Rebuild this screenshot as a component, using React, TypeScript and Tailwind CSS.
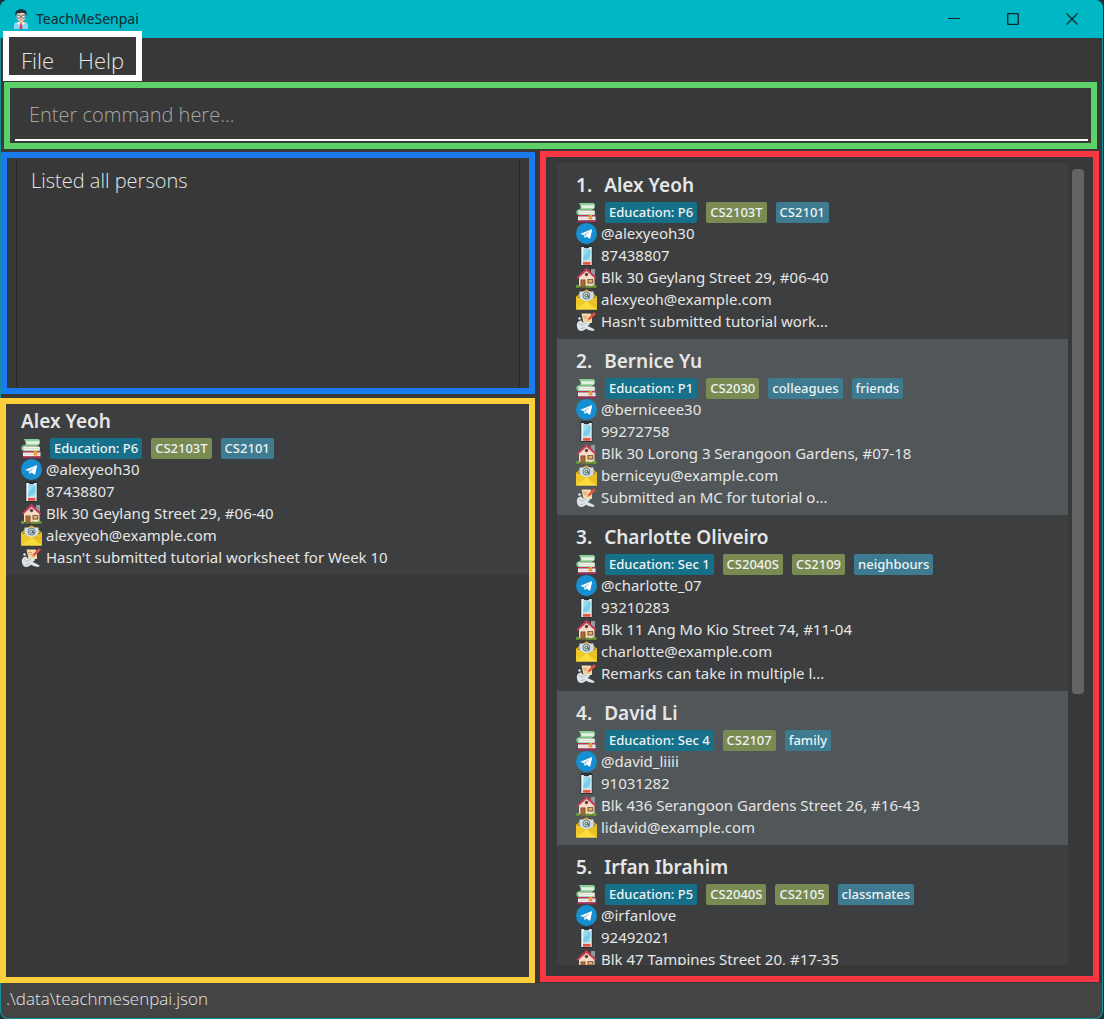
import React from "react";

type Tag = { text: string; kind: "edu" | "module" | "plain" };
type Person = {
  name: string;
  tags: Tag[];
  handle: string;
  phone: string;
  address: string;
  email?: string;
  remark?: string;
};

const edu = (text: string): Tag => ({ text, kind: "edu" });
const mod = (text: string): Tag => ({ text, kind: "module" });
const tag = (text: string): Tag => ({ text, kind: "plain" });

const alex: Person = {
  name: "Alex Yeoh",
  tags: [edu("Education: P6"), mod("CS2103T"), tag("CS2101")],
  handle: "@alexyeoh30",
  phone: "87438807",
  address: "Blk 30 Geylang Street 29, #06-40",
  email: "alexyeoh@example.com",
  remark: "Hasn't submitted tutorial worksheet for Week 10",
};

const people: Person[] = [
  { ...alex, remark: "Hasn't submitted tutorial work..." },
  {
    name: "Bernice Yu",
    tags: [edu("Education: P1"), mod("CS2030"), tag("colleagues"), tag("friends")],
    handle: "@berniceee30",
    phone: "99272758",
    address: "Blk 30 Lorong 3 Serangoon Gardens, #07-18",
    email: "berniceyu@example.com",
    remark: "Submitted an MC for tutorial o...",
  },
  {
    name: "Charlotte Oliveiro",
    tags: [edu("Education: Sec 1"), mod("CS2040S"), mod("CS2109"), tag("neighbours")],
    handle: "@charlotte_07",
    phone: "93210283",
    address: "Blk 11 Ang Mo Kio Street 74, #11-04",
    email: "charlotte@example.com",
    remark: "Remarks can take in multiple l...",
  },
  {
    name: "David Li",
    tags: [edu("Education: Sec 4"), mod("CS2107"), tag("family")],
    handle: "@david_liiii",
    phone: "91031282",
    address: "Blk 436 Serangoon Gardens Street 26, #16-43",
    email: "lidavid@example.com",
  },
  {
    name: "Irfan Ibrahim",
    tags: [edu("Education: P5"), mod("CS2040S"), mod("CS2105"), tag("classmates")],
    handle: "@irfanlove",
    phone: "92492021",
    address: "Blk 47 Tampines Street 20, #17-35",
  },
];

const tagColors = {
  edu: "bg-[#17708a]",
  module: "bg-[#7a8a53]",
  plain: "bg-[#3e7b91]",
};

function Icon({ children }: { children: React.ReactNode }) {
  return (
    <svg aria-hidden="true" viewBox="0 0 21 21" className="size-[21px] shrink-0">
      {children}
    </svg>
  );
}

const BooksIcon = () => (
  <Icon>
    <path d="M3 1h14q2 0 2 3t-2 3.500H4Q5.500 5 3 1Z" fill="#8ccf98" />
    <path d="M5 3.200h13q.4 1.600-.3 3H5.400Q5.900 4.500 5 3.200Z" fill="#e4f0e2" />
    <path d="M2.500 7.300H16v1.200H3.500v3.600H19v1H2.500Q.3 12.700.3 10.200t2.200-2.900Z" fill="#8ccf98" />
    <path d="M3 8.500h15.500q1 2 0 3.800H3q-1-2 0-3.800Z" fill="#f4f4ee" />
    <path d="M3.500 10.500h15" stroke="#cdd8c8" strokeWidth=".8" />
    <path d="M2 13h17.500v1.500H3Q2 14.500 2 13Z" fill="#c92f5b" />
    <path d="M2 14.500h17.500v3.900H2Z" fill="#f5efec" />
    <path d="M3 16.400h16" stroke="#dccaca" strokeWidth=".8" />
    <path d="M.5 18.400h20v1.800H3Q1 20 .5 18.400Z" fill="#a82a5a" />
    <path d="M12.800 13h3.400v5.300l-1.700-1.200-1.700 1.200Z" fill="#f0963a" />
  </Icon>
);

const TelegramIcon = () => (
  <Icon>
    <circle cx="10.500" cy="10.500" r="10.500" fill="#168fd2" />
    <path d="M4.500 10.700 15.500 6.200q.8-.1.600.8l-1.800 8q-.3.900-1.100.4l-2.700-2-1.500 1.400q-.5.400-.6-.3l-.8-2.800-3-.5q-.8-.3-.1-.5Z" fill="#fff" />
    <path d="M8 11.600 14 7.700l-4.500 5-.5 1.800Z" fill="#8fc8e9" />
  </Icon>
);

const PhoneIcon = () => (
  <Icon>
    <rect x="4.500" y="0" width="12" height="21" rx="1.500" fill="#26333b" />
    <path d="M5.300 2h2.200l1 1.300h4l1-1.300h2.200v18H5.300Z" fill="#eef3f3" />
    <path d="M7.300 4h7v11.500h-7Z" fill="#8fdcf0" />
    <path d="M14.300 4v7L9 15.500H7.300V12Z" fill="#74cdea" />
    <rect x="7" y="16.800" width="7.500" height="3" fill="#e8503f" />
  </Icon>
);

const HouseIcon = () => (
  <Icon>
    <path d="M15 2h4v7l-4-3Z" fill="#8f9ba5" />
    <path d="M3 10 10.500 3l8 7.500V19H3Z" fill="#f5dcc5" />
    <path d="M.5 10.500 10.500.8l10 9.700-1.500 1L10.500 4 2 11.500Z" fill="#c83b55" />
    <circle cx="10.500" cy="7.500" r="1.700" fill="#5a4053" />
    <rect x="4.500" y="12.500" width="5" height="7" fill="#7c4d2c" />
    <rect x="5.300" y="13.200" width="3.400" height="6.200" fill="#a9682f" />
    <rect x="11.500" y="12.200" width="5.800" height="4.300" fill="#69432e" />
    <rect x="12.400" y="13" width="4" height="2.600" fill="#e5b064" />
    <path d="M0 20.500v-1.800q1.600-1.800 3.200 0v1.800ZM10 20.500v-1.200q1.500-1.800 3-.8t3 0 4.500 0v2Z" fill="#6da83f" />
    <path d="M0 20h20.500" stroke="#718c3a" />
  </Icon>
);

const MailIcon = () => (
  <Icon>
    <path d="m0 8 3-3L10.500.2 18 5l3 3Z" fill="#d8a51c" />
    <path d="M3.500 2.500h14v12h-14Z" fill="#cfdfe4" />
    <path d="M0 7.500 10.500 13 21 7.500V20.500H0Z" fill="#f4d32f" />
    <path d="M21 7.500v13L10.500 13Z" fill="#e8c026" />
    <path d="M0 7.500v13L10.500 13Z" fill="#f0c928" />
    <path d="m0 20.500 10.500-8 10.500 8Z" fill="#f7dc3c" />
    <circle cx="10.500" cy="6.600" r="3.500" fill="none" stroke="#5c727a" strokeWidth=".9" />
    <path d="M11.800 8.300V5.100M11.800 6.800a1.500 1.500 0 1 1 0-.2Q11.800 8.800 13.800 8.300" fill="none" stroke="#3b5056" strokeWidth=".9" />
  </Icon>
);

const RemarkIcon = () => (
  <Icon>
    <path d="M5.500 2.500h9l1.500 2v7.500H7.500Z" fill="#f5d9ac" />
    <path d="M7 5.500h4M8 7.500h3" stroke="#d99a55" strokeWidth=".9" />
    <path d="M.8 14q.2-3.500 3.200-4.200 2.200-1 2 1.200l2.500 1q3-2.500 4.200-.6l1.500 1.500-2.500 2 4.300 2.200 2.500 1.400-.7 1.400-4.500-.7-3.500-1.500Q8 20 5 20 1 19.500.8 14Z" fill="#dde4e8" />
    <path d="m3 12 3 2.500 4-2.500M4.500 18l4-1.500" fill="none" stroke="#a8b5bc" strokeWidth=".8" />
    <path d="m11.500 7.800 6.500-6.500 2 1.800L13.500 9.300Z" fill="#e0533f" />
    <path d="m11.500 7.800-1 2.700 3-1.200Z" fill="#f4a23c" />
    <circle cx="3.500" cy="7.500" r="1.200" fill="#eef2f3" />
  </Icon>
);

function Avatar() {
  return (
    <svg aria-hidden="true" viewBox="0 0 14 20" className="h-5 w-3.5">
      <path d="M0 20v-4q0-2.500 3-3h8q3 .5 3 3v4Z" fill="#8fd3f5" />
      <path d="M5 11h4v3l-2 2-2-2Z" fill="#efb99a" />
      <path d="m4 13 3 2 3-2 .5 2-3.500 1-3.500-1Z" fill="#fff" />
      <path d="M6.200 14.300h1.600l.7 5.700h-3Z" fill="#d64052" />
      <ellipse cx="7" cy="7.500" rx="4.700" ry="5" fill="#f6cbb0" />
      <path d="M1.800 7Q0 2 4 1q3-2 6 0 3.500.5 2.300 6-1-3-3-3.200Q5 4.500 3.200 4.200 2.500 5 1.800 7Z" fill="#173044" />
      <rect x="2.900" y="6.300" width="3.500" height="2.800" rx="1" fill="#dff2f6" stroke="#294153" strokeWidth=".7" />
      <rect x="7.600" y="6.300" width="3.500" height="2.800" rx="1" fill="#dff2f6" stroke="#294153" strokeWidth=".7" />
      <path d="M6.400 7.300h1.200M6 10.700h2" stroke="#7a4a42" strokeWidth=".6" />
    </svg>
  );
}

function Row({ icon, children }: { icon: React.ReactNode; children: React.ReactNode }) {
  return (
    <div className="flex h-[22px] items-start gap-1 whitespace-nowrap text-[15px] leading-5">
      {icon}
      <span>{children}</span>
    </div>
  );
}

function PersonCard({ person, index }: { person: Person; index?: number }) {
  return (
    <>
      <h2 className="mb-0.5 flex gap-3 whitespace-nowrap text-[19px] leading-7 font-semibold">
        {index !== undefined && <span>{index}.</span>}
        <span>{person.name}</span>
      </h2>
      <div className="flex h-[22px] items-center gap-2">
        <BooksIcon />
        <ul className="flex gap-[9px]">
          {person.tags.map((t) => (
            <li
              key={t.text}
              className={`rounded-xs px-1 text-[13px] leading-[21px] font-medium whitespace-nowrap text-[#eef3f4] ${tagColors[t.kind]}`}
            >
              {t.text}
            </li>
          ))}
        </ul>
      </div>
      <Row icon={<TelegramIcon />}>{person.handle}</Row>
      <Row icon={<PhoneIcon />}>{person.phone}</Row>
      <Row icon={<HouseIcon />}>{person.address}</Row>
      {person.email && <Row icon={<MailIcon />}>{person.email}</Row>}
      {person.remark && <Row icon={<RemarkIcon />}>{person.remark}</Row>}
    </>
  );
}

export default function App() {
  return (
    <div className="h-screen bg-[#173439] pr-px font-['Noto_Sans','Open_Sans',sans-serif] text-[#e6e6e6]">
      <div className="flex h-full flex-col overflow-hidden rounded-lg bg-[#383838] shadow-[inset_0_0_0_1px_#168e98]">
        <header className="flex h-[38px] shrink-0 items-center justify-between bg-[#00b7c6] pl-3.5 text-[#10292d]">
          <div className="flex items-center gap-2">
            <Avatar />
            <h1 className="text-sm">TeachMeSenpai</h1>
          </div>
          <div className="flex self-stretch pr-0.5">
            <button type="button" aria-label="Minimize" className="grid w-[59px] place-items-center">
              <svg viewBox="0 0 12 12" className="size-3" fill="none" stroke="currentColor">
                <path d="M0 5.500h12" />
              </svg>
            </button>
            <button type="button" aria-label="Maximize" className="grid w-[59px] place-items-center">
              <svg viewBox="0 0 12 12" className="size-3" fill="none" stroke="currentColor">
                <rect x=".7" y=".7" width="10.600" height="10.600" rx=".6" strokeWidth="1.300" />
              </svg>
            </button>
            <button type="button" aria-label="Close" className="grid w-[59px] place-items-center">
              <svg viewBox="0 0 12 12" className="size-3" fill="none" stroke="currentColor">
                <path d="m.5.5 11 11M11.500.5l-11 11" strokeWidth="1.200" />
              </svg>
            </button>
          </div>
        </header>

        <div className="h-11 shrink-0">
          <nav className="relative -mt-[7px] ml-[3px] flex h-[50px] w-fit items-center gap-6 border-6 border-white bg-[#383838] px-3 pt-2 font-['Open_Sans'] text-[22px] font-light">
            <button type="button">File</button>
            <button type="button">Help</button>
          </nav>
        </div>

        <div className="mr-1.5 ml-1 shrink-0 border-6 border-[#5dd068] pt-0.5 pr-[3px] pb-0.5 pl-[5px]">
          <input
            aria-label="Command"
            placeholder="Enter command here..."
            className="block h-[51px] w-full border-b-2 border-white bg-transparent px-3.5 font-['Open_Sans'] text-[20px] font-light outline-none placeholder:text-[#a6a6a6]"
          />
        </div>

        <main className="grid min-h-0 flex-1 grid-cols-[minmax(0,535fr)_minmax(0,559fr)] grid-rows-[minmax(0,1fr)] gap-[5px] pt-0.5 pr-1">
          <div className="flex min-h-0 flex-col gap-1 pt-px">
            <section className="ml-px h-[242px] shrink-0 border-6 border-[#1a7bf0] px-[9px]">
              <div className="h-full border-x border-[#2b2b2b] px-3.5 pt-2 font-['Open_Sans'] text-[20px] leading-[30px] font-light">
                Listed all persons
              </div>
            </section>
            <section className="min-h-0 flex-1 overflow-hidden border-6 border-[#fdd03b] bg-[#383838]">
              <div className="bg-[#3c3e3f] pt-[3px] pb-1.5 pl-[15px]">
                <PersonCard person={alex} />
              </div>
            </section>
          </div>
          <section className="mb-px flex min-h-0 gap-1 border-6 border-[#f83644] bg-[#383838] pt-1.5 pr-[9px] pb-[11px] pl-[11px]">
            <ol className="min-w-0 flex-1 overflow-x-hidden overflow-y-auto [scrollbar-width:none]">
              {people.map((p, i) => (
                <li key={p.name} className="bg-[#3c3e3f] px-[19px] pt-2 pb-1.5 even:bg-[#515658]">
                  <PersonCard person={p} index={i + 1} />
                </li>
              ))}
            </ol>
            <div className="w-3 shrink-0 pt-1.5">
              <div className="h-[66%] rounded-sm bg-[#646464]" />
            </div>
          </section>
        </main>

        <footer className="h-9 shrink-0 rounded-b-lg border-x border-b border-[#168e98] bg-[#444444] pl-[5px] font-['Open_Sans'] text-[17px] leading-[32px] font-light">
          .\data\teachmesenpai.json
        </footer>
      </div>
    </div>
  );
}
